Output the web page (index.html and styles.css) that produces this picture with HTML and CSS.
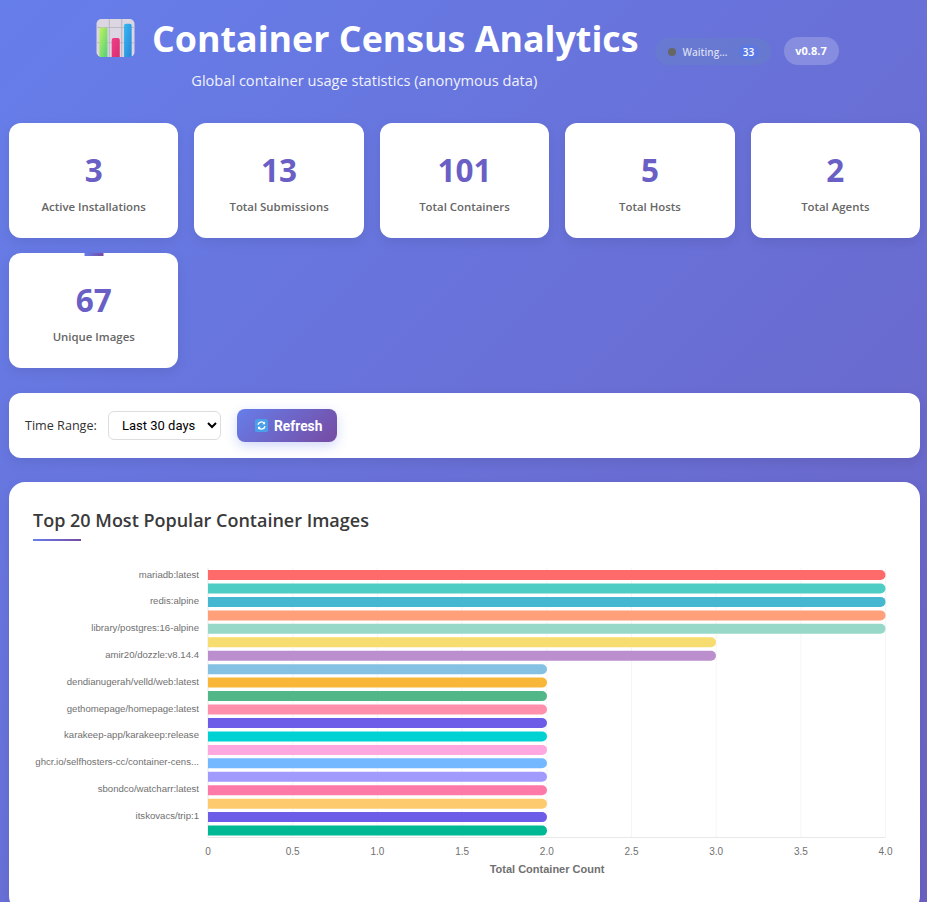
FILE: index.html
```html
<!DOCTYPE html>
<html lang="en">
<head>
<meta charset="utf-8">
<title>Container Census Analytics</title>
<link rel="stylesheet" href="styles.css">
</head>
<body>
<div class="page">
  <header class="header">
    <div class="brand">
      <h1 class="title">
        <svg class="title-icon" viewBox="0 0 40 40" aria-hidden="true">
          <defs>
            <linearGradient id="barG" x1="0" y1="0" x2="1" y2="1"><stop offset="0" stop-color="#c4f25c"/><stop offset="1" stop-color="#4fcf7c"/></linearGradient>
            <linearGradient id="barP" x1="0" y1="0" x2="1" y2="1"><stop offset="0" stop-color="#f03f86"/><stop offset="1" stop-color="#d92c74"/></linearGradient>
            <linearGradient id="barB" x1="0" y1="0" x2="1" y2="1"><stop offset="0" stop-color="#35b8f2"/><stop offset="1" stop-color="#2a86d8"/></linearGradient>
          </defs>
          <rect x="0" y="0" width="40" height="40" rx="5" fill="#dcd6e2"/>
          <path d="M13.5 0v40M26.5 0v40M0 9h40M0 25h40" stroke="#bdb8c6" stroke-width="1.2"/>
          <path d="M3 40V11q0-2 2-2h4.500q2 0 2 2V40z" fill="url(#barG)"/>
          <path d="M16 40V22q0-2 2-2h4.500q2 0 2 2v18z" fill="url(#barP)"/>
          <path d="M29 40V7q0-2 2-2h4q2 0 2 2v33z" fill="url(#barB)"/>
        </svg>
        <span>Container Census Analytics</span>
      </h1>
      <p class="subtitle">Global container usage statistics (anonymous data)</p>
    </div>
    <div class="status-pill">
      <span class="status-dot"></span>
      <span class="status-text">Waiting...</span>
      <span class="status-count">33</span>
    </div>
    <div class="version-pill">v0.8.7</div>
  </header>

  <section class="stats">
    <div class="stat"><div class="stat-value">3</div><div class="stat-label">Active Installations</div></div>
    <div class="stat"><div class="stat-value">13</div><div class="stat-label">Total Submissions</div></div>
    <div class="stat"><div class="stat-value">101</div><div class="stat-label">Total Containers</div></div>
    <div class="stat"><div class="stat-value">5</div><div class="stat-label">Total Hosts</div></div>
    <div class="stat"><div class="stat-value">2</div><div class="stat-label">Total Agents</div></div>
    <div class="stat stat-active"><div class="stat-value">67</div><div class="stat-label">Unique Images</div></div>
  </section>

  <section class="controls">
    <label class="range-label" for="range">Time Range:</label>
    <select class="range-select" id="range">
      <option>Last 30 days</option>
      <option>Last 7 days</option>
      <option>Last 90 days</option>
    </select>
    <button class="refresh" type="button">
      <svg class="refresh-icon" viewBox="0 0 14 14" aria-hidden="true">
        <rect width="14" height="14" rx="2" fill="#4a9fe8"/>
        <path d="M3.2 6.2A3.9 3.9 0 0 1 10 4.6M10.8 7.8A3.9 3.9 0 0 1 4 9.4" fill="none" stroke="#fff" stroke-width="1.4"/>
        <path d="M10.8 2.6v3h-3zM3.2 11.4v-3h3z" fill="#fff"/>
      </svg>
      <span>Refresh</span>
    </button>
  </section>

  <section class="chart-card">
    <h2 class="chart-title">Top 20 Most Popular Container Images</h2>
    <svg class="chart" viewBox="0 0 911 420" aria-label="Bar chart">
      <g class="grid-lines" transform="translate(-9 -482)">
        <path d="M292.7 568v269M377.4 568v269M462.1 568v269M546.8 568v269M631.5 568v269M716.2 568v269M800.9 568v269M885.5 568v269"/>
      </g>
      <g class="axis-lines" transform="translate(-9 -482)">
        <path d="M208 568v270M208 837.5h677.5"/>
      </g>
      <g transform="translate(-9 -482)">
        <path fill="#ff6b6b" d="M208 570h672.5a5 5 0 0 1 0 10H208z"/>
        <path fill="#4ecdc4" d="M208 583.5h672.5a5 5 0 0 1 0 10H208z"/>
        <path fill="#45b7d1" d="M208 596.9h672.5a5 5 0 0 1 0 10H208z"/>
        <path fill="#ffa07a" d="M208 610.4h672.5a5 5 0 0 1 0 10H208z"/>
        <path fill="#98d8c8" d="M208 623.8h672.5a5 5 0 0 1 0 10H208z"/>
        <path fill="#f7dc6f" d="M208 637.3h503a5 5 0 0 1 0 10H208z"/>
        <path fill="#bb8fce" d="M208 650.7h503a5 5 0 0 1 0 10H208z"/>
        <path fill="#85c1e2" d="M208 664.2h334a5 5 0 0 1 0 10H208z"/>
        <path fill="#f8b739" d="M208 677.6h334a5 5 0 0 1 0 10H208z"/>
        <path fill="#52b788" d="M208 691.1h334a5 5 0 0 1 0 10H208z"/>
        <path fill="#ff8fab" d="M208 704.5h334a5 5 0 0 1 0 10H208z"/>
        <path fill="#6c5ce7" d="M208 718h334a5 5 0 0 1 0 10H208z"/>
        <path fill="#00d2d3" d="M208 731.4h334a5 5 0 0 1 0 10H208z"/>
        <path fill="#ffa8e0" d="M208 744.9h334a5 5 0 0 1 0 10H208z"/>
        <path fill="#74b9ff" d="M208 758.3h334a5 5 0 0 1 0 10H208z"/>
        <path fill="#a29bfe" d="M208 771.8h334a5 5 0 0 1 0 10H208z"/>
        <path fill="#fd79a8" d="M208 785.2h334a5 5 0 0 1 0 10H208z"/>
        <path fill="#fdcb6e" d="M208 798.7h334a5 5 0 0 1 0 10H208z"/>
        <path fill="#6c5ce7" d="M208 812.1h334a5 5 0 0 1 0 10H208z"/>
        <path fill="#00b894" d="M208 825.6h334a5 5 0 0 1 0 10H208z"/>
      </g>
      <g class="y-labels" transform="translate(-9 -482)">
        <text x="199" y="578">mariadb:latest</text>
        <text x="199" y="604">redis:alpine</text>
        <text x="199" y="631">library/postgres:16-alpine</text>
        <text x="199" y="658">amir20/dozzle:v8.14.4</text>
        <text x="199" y="685">dendianugerah/velld/web:latest</text>
        <text x="199" y="712">gethomepage/homepage:latest</text>
        <text x="199" y="738">karakeep-app/karakeep:release</text>
        <text x="199" y="765">ghcr.io/selfhosters-cc/container-cens...</text>
        <text x="199" y="792">sbondco/watcharr:latest</text>
        <text x="199" y="819">itskovacs/trip:1</text>
      </g>
      <g class="x-labels" transform="translate(-9 -482)">
        <text x="208" y="855">0</text>
        <text x="292.7" y="855">0.5</text>
        <text x="377.4" y="855">1.0</text>
        <text x="462.1" y="855">1.5</text>
        <text x="546.8" y="855">2.0</text>
        <text x="631.5" y="855">2.5</text>
        <text x="716.2" y="855">3.0</text>
        <text x="800.9" y="855">3.5</text>
        <text x="885.5" y="855">4.0</text>
        <text class="x-title" x="547" y="873">Total Container Count</text>
      </g>
    </svg>
  </section>
</div>
</body>
</html>
```
FILE: styles.css
```css
* { box-sizing: border-box; }
html, body { margin: 0; padding: 0; height: 902px; overflow: hidden; }
body {
  background: linear-gradient(135deg, #667eea 0%, #6b62c3 100%);
  font-family: "Open Sans", "Noto Sans", sans-serif;
  color: #333;
}
.page { padding: 0 7px 0 9px; }

.header {
  display: flex;
  align-items: flex-start;
  height: 123px;
  padding: 37px 0 0 87px;
  color: #fff;
}
.brand { display: flex; flex-direction: column; align-items: center; margin-top: -18px; margin-right: 16px; }
.title {
  display: flex;
  align-items: center;
  gap: 17px;
  margin: 0;
  font-size: 35.8px;
  font-weight: 700;
  line-height: 38px;
}
.title-icon { width: 39px; height: 38px; }
.subtitle { margin: 13px 0 0 -6px; font-size: 14.6px; line-height: 20px; opacity: .9; }

.status-pill {
  display: flex;
  align-items: center;
  height: 27px;
  width: 116px;
  padding: 0 12px 0 13px;
  margin-top: 1px;
  border-radius: 14px;
  background: rgba(102, 126, 200, .55);
}
.status-dot { width: 8px; height: 8px; border-radius: 50%; background: #666; }
.status-text { margin-left: 7px; font-size: 10px; font-weight: 600; color: #d8dcf0; }
.status-count {
  margin-left: auto;
  min-width: 20px;
  height: 14px;
  border-radius: 7px;
  background: #5b78e2;
  font-size: 10px;
  font-weight: 600;
  line-height: 14px;
  text-align: center;
}
.version-pill {
  margin-left: 13px;
  width: 55px;
  height: 28px;
  border-radius: 14px;
  background: rgba(255, 255, 255, .2);
  font-size: 11px;
  font-weight: 700;
  line-height: 28px;
  text-align: center;
}

.stats {
  display: grid;
  grid-template-columns: repeat(5, 1fr);
  gap: 15px 16px;
}
.stat {
  position: relative;
  height: 115px;
  padding-top: 25px;
  border-radius: 12px;
  background: #fff;
  box-shadow: 0 4px 12px rgba(0, 0, 0, .08);
  text-align: center;
}
.stat-active::before {
  content: "";
  position: absolute;
  top: 0;
  left: 50%;
  width: 19px;
  height: 3px;
  transform: translateX(-50%);
  background: linear-gradient(90deg, #667eea, #764ba2);
}
.stat-value { font-size: 31.5px; font-weight: 700; line-height: 44px; color: #6a5fc4; }
.stat-label { margin-top: 6px; font-size: 11.4px; font-weight: 600; line-height: 18px; color: #666; }

.controls {
  display: flex;
  align-items: center;
  height: 65px;
  margin-top: 25px;
  padding: 0 16px;
  border-radius: 12px;
  background: #fff;
  box-shadow: 0 4px 12px rgba(0, 0, 0, .08);
}
.range-label { width: 72px; font-size: 12.6px; font-weight: 500; color: #333; white-space: nowrap; }
.range-select {
  width: 113px;
  height: 29px;
  margin-left: 11px;
  padding: 0 0 0 9px;
  border: 1px solid #ddd;
  border-radius: 6px;
  background: #fff;
  font-family: Roboto, sans-serif;
  font-size: 13px;
  color: #000;
}
.refresh {
  display: flex;
  align-items: center;
  gap: 6px;
  width: 100px;
  height: 33px;
  margin-left: 16px;
  padding: 0 0 0 18px;
  border: 0;
  border-radius: 8px;
  background: linear-gradient(135deg, #667eea, #764ba2);
  box-shadow: 0 4px 12px rgba(102, 126, 234, .3);
  color: #fff;
  font-family: Roboto, sans-serif;
  font-size: 13.8px;
  font-weight: 700;
}
.refresh-icon { width: 13px; height: 13px; }

.chart-card {
  height: 430px;
  margin-top: 24px;
  border-radius: 16px;
  background: #fff;
  box-shadow: 0 4px 12px rgba(0, 0, 0, .08);
  position: relative;
}
.chart-title {
  position: relative;
  margin: 0;
  padding: 25px 0 0 24px;
  font-size: 18px;
  font-weight: 600;
  line-height: 26px;
  color: #3a3a3a;
}
.chart-title::after {
  content: "";
  display: block;
  width: 48px;
  height: 2px;
  margin-top: 6px;
  background: linear-gradient(90deg, #667eea, #764ba2);
}
.chart { position: absolute; left: 0; top: 0; width: 911px; height: 420px; }
.grid-lines path { stroke: #f5f5f5; stroke-width: 1; fill: none; }
.axis-lines path { stroke: #e8e8e8; stroke-width: 1; fill: none; }
.y-labels text { font-family: "Liberation Sans", Arial, sans-serif; font-size: 9.6px; fill: #707070; text-anchor: end; }
.x-labels text { font-family: "Liberation Sans", Arial, sans-serif; font-size: 10px; fill: #707070; text-anchor: middle; }
.x-labels .x-title { font-size: 11px; font-weight: 700; }
```
